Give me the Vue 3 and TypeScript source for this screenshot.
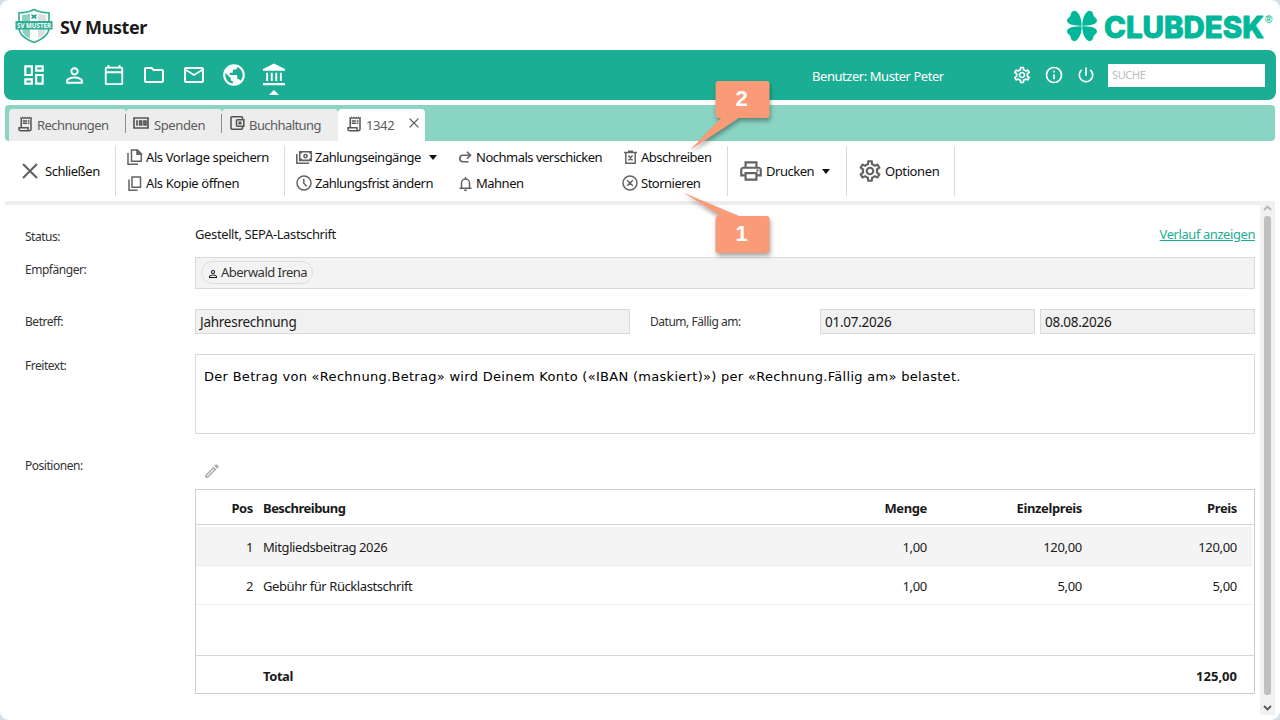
<script setup lang="ts">
import { h, type FunctionalComponent } from 'vue'

interface Glyph {
  d: string
  box?: string
  line?: number
}

const glyphs: Record<string, Glyph> = {
  dashboard: { d: 'M19 5v2h-4V5h4M9 5v6H5V5h4m10 8v6h-4v-6h4M9 17v2H5v-2h4M21 3h-8v6h8V3zM11 3H3v10h8V3zm10 8h-8v10h8V11zm-10 4H3v6h8v-6z' },
  person: { d: 'M12 5.9a2.1 2.1 0 1 1 0 4.2 2.1 2.1 0 0 1 0-4.2m0 9c2.97 0 6.1 1.46 6.1 2.1v1.1H5.9V17c0-.64 3.13-2.1 6.1-2.1M12 4C9.79 4 8 5.79 8 8s1.79 4 4 4 4-1.79 4-4-1.79-4-4-4zm0 9c-2.67 0-8 1.34-8 4v3h16v-3c0-2.66-5.33-4-8-4z' },
  calendar: { d: 'M20 3h-1V1h-2v2H7V1H5v2H4c-1.1 0-2 .9-2 2v16c0 1.1.9 2 2 2h16c1.1 0 2-.9 2-2V5c0-1.1-.9-2-2-2zm0 18H4V10h16v11zm0-13H4V5h16v3z' },
  folder: { d: 'M9.17 6l2 2H20v10H4V6h5.17M10 4H4c-1.1 0-2 .9-2 2v12c0 1.1.9 2 2 2h16c1.1 0 2-.9 2-2V8c0-1.1-.9-2-2-2h-8l-2-2z' },
  mail: { d: 'M22 6c0-1.1-.9-2-2-2H4c-1.1 0-2 .9-2 2v12c0 1.1.9 2 2 2h16c1.1 0 2-.9 2-2V6zm-2 0-8 5-8-5h16zm0 12H4V8l8 5 8-5v10z' },
  globe: { d: 'M12 2C6.48 2 2 6.48 2 12s4.48 10 10 10 10-4.48 10-10S17.52 2 12 2zm-1 17.93c-3.95-.49-7-3.85-7-7.93 0-.62.08-1.21.21-1.79L9 15v1c0 1.1.9 2 2 2v1.93zm6.9-2.54c-.26-.81-1-1.39-1.9-1.39h-1v-3c0-.55-.45-1-1-1H8v-2h2c.55 0 1-.45 1-1V7h2c1.1 0 2-.9 2-2v-.41c2.93 1.19 5 4.06 5 7.41 0 2.08-.8 3.97-2.1 5.39z' },
  bank: { d: 'M12 .5 1 6v1.800h22V6zM4.200 9.800h1.900v8.200H4.200zM8.800 9.800h1.900v8.200H8.800zM13.300 9.800h1.900v8.200h-1.900zM17.900 9.800h1.900v8.200h-1.900zM1 20h22v2.200H1z' },
  gear: { d: 'M19.43 12.98c.04-.32.07-.64.07-.98 0-.34-.03-.66-.07-.98l2.110-1.650c.19-.15.24-.42.12-.64l-2-3.460c-.09-.16-.26-.25-.44-.25-.06 0-.12.01-.17.03l-2.490 1c-.52-.4-1.080-.73-1.690-.98l-.38-2.650C14.460 2.180 14.250 2 14 2h-4c-.25 0-.46.18-.49.42l-.38 2.650c-.61.25-1.170.59-1.690.98l-2.490-1c-.06-.02-.12-.03-.18-.03-.17 0-.34.09-.43.25l-2 3.460c-.13.22-.07.49.12.64l2.110 1.650c-.04.32-.07.65-.07.98s.03.66.07.98l-2.110 1.650c-.19.15-.24.42-.12.64l2 3.460c.09.16.26.25.44.25.06 0 .12-.01.17-.03l2.490-1c.52.4 1.080.73 1.690.98l.38 2.650c.03.24.24.42.49.42h4c.25 0 .46-.18.49-.42l.38-2.650c.61-.25 1.170-.59 1.690-.98l2.490 1c.06.02.12.03.18.03.17 0 .34-.09.43-.25l2-3.460c.12-.22.07-.49-.12-.64l-2.110-1.650zm-1.980-1.710c.04.31.05.52.05.73 0 .21-.02.43-.05.73l-.14 1.130.89.7 1.080.84-.7 1.210-1.270-.51-1.040-.42-.9.68c-.43.32-.84.56-1.250.73l-1.060.43-.16 1.130-.2 1.350h-1.400l-.19-1.350-.16-1.130-1.060-.43c-.43-.18-.83-.41-1.230-.71l-.91-.7-1.060.43-1.270.51-.7-1.210 1.080-.84.89-.7-.14-1.130c-.03-.31-.05-.54-.05-.74s.02-.43.05-.73l.14-1.130-.89-.7-1.080-.84.7-1.210 1.270.51 1.040.42.9-.68c.43-.32.84-.56 1.250-.73l1.060-.43.16-1.130.2-1.350h1.390l.19 1.350.16 1.130 1.060.43c.43.18.83.41 1.230.71l.91.7 1.060-.43 1.270-.51.7 1.210-1.070.85-.89.7.14 1.130zM12 8c-2.210 0-4 1.790-4 4s1.790 4 4 4 4-1.790 4-4-1.790-4-4-4zm0 6c-1.100 0-2-.9-2-2s.9-2 2-2 2 .9 2 2-.9 2-2 2z' },
  info: { d: 'M12 2a10 10 0 1 0 0 20 10 10 0 0 0 0-20zm0 18a8 8 0 1 1 0-16 8 8 0 0 1 0 16zM11 7h2v2h-2zM11 11h2v6h-2z' },
  power: { d: 'M13 3h-2v10h2V3zm4.830 2.170-1.420 1.420A6.920 6.920 0 0 1 19 12a7 7 0 1 1-11.420-5.420L6.170 5.170A8.930 8.930 0 0 0 3 12a9 9 0 1 0 14.830-6.830z' },
  receipt: { d: 'M19.5 3.5 18 2l-1.5 1.5L15 2l-1.5 1.5L12 2l-1.5 1.5L9 2 7.5 3.5 6 2v14H3v3c0 1.660 1.340 3 3 3h12c1.660 0 3-1.340 3-3V2l-1.5 1.5zM15 20H6c-.55 0-1-.45-1-1v-1h10v2zm4-1c0 .55-.45 1-1 1s-1-.45-1-1v-3H8V5h11v14zM9 7h6v2H9zm7 0h2v2h-2zM9 10h6v2H9zm7 0h2v2h-2z' },
  money: { d: 'M1 1h14v10H1zM4 3.200v5.600M6.700 4h1.900v4H6.700zM11 4h1.900v4H11z', box: '0 0 16 12', line: 1.7 },
  wallet: { d: 'M12.500 3V1.800a1 1 0 0 0-1-1h-9.500a1 1 0 0 0-1 1v10.400a1 1 0 0 0 1 1h9.500a1 1 0 0 0 1-1V11M7.500 3.700h6.300v6.600H7.500a1 1 0 0 1-1-1V4.700a1 1 0 0 1 1-1zM9.300 6.300h1.400v1.400H9.300z', box: '0 0 15 14', line: 1.6 },
  cross: { d: 'M1 1 15 15M15 1 1 15', box: '0 0 16 16', line: 2.2 },
  template: { d: 'M1 4v11.200h10M4.500 1h6L14.300 4.800v7.500H4.500zM10 1.200v4h4zM10.800 2v2.500M11.800 4.500h1', box: '0 0 16 16', line: 1.5 },
  copy: { d: 'M1 3.500V14.300h8.500M4 1h8.500v10.300H4z', box: '0 0 14 15', line: 1.5 },
  payments: { d: 'M3.700.8h11.600v8.600H3.700zM.8 3v9.200h12.400M9.500 3.500a1.600 1.600 0 1 1 0 3.200 1.600 1.600 0 0 1 0-3.200zM4.500 1.800h1.500M13 1.800h1.500M4.500 8.400h1.500M13 8.400h1.500', box: '0 0 16 13', line: 1.6 },
  clock: { d: 'M8 1a7 7 0 1 1 0 14A7 7 0 0 1 8 1zM7.800 3.800V8.200l3 3', box: '0 0 16 16', line: 1.5 },
  redo: { d: 'M8 .8l3.500 3.500L8 7.800M11.500 4.300H4a3.200 3.200 0 0 0 0 6.400h5.500', box: '0 0 13 12', line: 1.6 },
  bell: { d: 'M.5 12.300h12M2.500 12.300V7a4 4 0 0 1 8 0v5.300M6.500 1v2M5.200 14.200h2.600', box: '0 0 13 15', line: 1.5 },
  bin: { d: 'M0 2.500h13M4 1.200h5M1.800 3v10.200h9.400V3M4.500 5.500l4 5M8.500 5.500l-4 5', box: '0 0 13 14', line: 1.5 },
  cancel: { d: 'M8 1a7 7 0 1 1 0 14A7 7 0 0 1 8 1zM5.200 5.200l5.600 5.600M10.800 5.200l-5.600 5.600', box: '0 0 16 16', line: 1.5 },
  print: { d: 'M19 8h-1V3H6v5H5c-1.660 0-3 1.340-3 3v6h4v4h12v-4h4v-6c0-1.660-1.340-3-3-3zM8 5h8v3H8V5zm8 12v2H8v-4h8v2zm2-2v-2H6v2H4v-4c0-.55.45-1 1-1h14c.55 0 1 .45 1 1v4h-2zM17 10.500h2v2h-2z' },
  pencil: { d: 'M14.060 9.020l.92.92L5.920 19H5v-.92l9.060-9.060M17.660 3c-.25 0-.51.1-.7.290l-1.830 1.830 3.750 3.750 1.830-1.830a1 1 0 0 0 0-1.410l-2.340-2.340c-.2-.2-.45-.29-.71-.29zm-3.600 3.190L3 17.250V21h3.750L17.810 9.940l-3.750-3.750z' },
}

const Glyph: FunctionalComponent<{ name: string }> = (props) => {
  const g = glyphs[props.name]
  const paint = g.line
    ? { fill: 'none', stroke: 'currentColor', 'stroke-width': g.line }
    : { fill: 'currentColor' }
  return h('svg', { viewBox: g.box ?? '0 0 24 24', 'aria-hidden': 'true' }, [h('path', { d: g.d, ...paint })])
}
Glyph.props = ['name']

const modules = ['dashboard', 'person', 'calendar', 'folder', 'mail', 'globe', 'bank']

const tabs = [
  { id: 'rechnungen', label: 'Rechnungen', icon: 'receipt' },
  { id: 'spenden', label: 'Spenden', icon: 'money' },
  { id: 'buchhaltung', label: 'Buchhaltung', icon: 'wallet' },
]

const groups = [
  { id: 'g-save', items: [['template', 'Als Vorlage speichern'], ['copy', 'Als Kopie öffnen']] },
  { id: 'g-pay', items: [['payments', 'Zahlungseingänge'], ['clock', 'Zahlungsfrist ändern']] },
  { id: 'g-send', items: [['redo', 'Nochmals verschicken'], ['bell', 'Mahnen']] },
  { id: 'g-void', items: [['bin', 'Abschreiben'], ['cancel', 'Stornieren']] },
]

const positions = [
  { pos: 1, text: 'Mitgliedsbeitrag 2026', qty: '1,00', unit: '120,00', price: '120,00' },
  { pos: 2, text: 'Gebühr für Rücklastschrift', qty: '1,00', unit: '5,00', price: '5,00' },
]
</script>

<template>
  <div class="window">
    <header class="brand">
      <svg class="crest" viewBox="0 0 38 36">
        <path d="M19 1.500C14 4 9 4.800 4 4.800V20c0 7 6 11 15 14.500C28 31 34 27 34 20V4.800C29 4.800 24 4 19 1.500z" fill="#fff" stroke="#2fae94" stroke-width="1.600" />
        <path d="M7 7c3 0 5.500-.4 8-1.400v25C10 28.500 7 25 7 20z" fill="#8fd0c0" />
        <path d="M23 5.600c2.500 1 5 1.400 8 1.400v13c0 5-3 8.500-8 10.600z" fill="#dedede" />
        <path d="M16.500 6l2.500 1.300L21.500 6v1.700l-1 .9 1 .9v1.700L19 10l-2.500 1.200V9.500l1-.9-1-.9z" fill="#1bae94" />
        <path d="M.5 13h37v8.500H.5z" fill="#2fae94" />
        <text x="19" y="19.600" text-anchor="middle" textLength="34" lengthAdjust="spacingAndGlyphs">SV MUSTER</text>
      </svg>
      <h1>SV Muster</h1>
      <svg class="logo" viewBox="0 0 208 34">
        <g fill="#00b899">
          <path d="M15.700 15.700C10 15.700 1 15.200 1 10.500 1 8.500 2.800 8 4 6.500 5 5.200 4.500 3.500 5.800 2 7.500.4 9.500.6 11 2 14.500 5.300 15.700 11 15.700 15.700z" />
          <path d="M16.300 15.700C22 15.700 31 15.200 31 10.500 31 8.500 29.200 8 28 6.500 27 5.200 27.500 3.500 26.200 2 24.500.4 22.500.6 21 2 17.500 5.300 16.300 11 16.300 15.700z" />
          <path d="M15.700 16.300C10 16.300 1 16.800 1 21.500 1 23.500 2.800 24 4 25.500 5 26.800 4.500 28.500 5.800 30 7.500 31.600 9.500 31.400 11 30 14.500 26.700 15.700 21 15.700 16.300z" />
          <path d="M16.300 16.300C22 16.300 31 16.800 31 21.500 31 23.500 29.200 24 28 25.500 27 26.800 27.500 28.500 26.200 30 24.500 31.600 22.500 31.400 21 30 17.500 26.700 16.300 21 16.300 16.300z" />
          <text class="word" x="38" y="27.600" textLength="160" lengthAdjust="spacing">CLUBDESK</text>
          <text class="reg" x="199" y="13">®</text>
        </g>
      </svg>
    </header>

    <nav class="modules">
      <div class="module-list">
        <span v-for="m in modules" :key="m" class="module" :class="[m, { current: m === 'bank' }]">
          <Glyph :name="m" />
        </span>
      </div>
      <span class="user">Benutzer: Muster Peter</span>
      <div class="tools">
        <Glyph name="gear" />
        <Glyph name="info" />
        <Glyph name="power" />
      </div>
      <div class="search">SUCHE</div>
    </nav>

    <div class="tabs">
      <div v-for="t in tabs" :key="t.id" class="tab" :class="t.id">
        <Glyph :name="t.icon" class="tab-icon" />
        <span>{{ t.label }}</span>
      </div>
      <div class="tab active">
        <Glyph name="receipt" class="tab-icon" />
        <span>1342</span>
        <Glyph name="cross" class="tab-close" />
      </div>
    </div>

    <div class="toolbar">
      <div class="big close"><Glyph name="cross" /><span>Schließen</span></div>
      <div v-for="g in groups" :key="g.id" class="group" :class="g.id">
        <div v-for="[icon, label] in g.items" :key="icon" class="action">
          <span class="slot"><Glyph :name="icon" :class="icon" /></span>
          <span>{{ label }}</span>
          <i v-if="icon === 'payments'" class="caret"></i>
        </div>
      </div>
      <div class="big print"><Glyph name="print" /><span>Drucken</span><i class="caret"></i></div>
      <div class="big options"><Glyph name="gear" /><span>Optionen</span></div>
    </div>

    <div class="body">
      <main class="form">
        <div class="row status">
          <label>Status:</label>
          <span class="value">Gestellt, SEPA-Lastschrift</span>
          <a class="history">Verlauf anzeigen</a>
        </div>
        <div class="row recipient">
          <label>Empfänger:</label>
          <div class="field chips">
            <span class="chip"><Glyph name="person" /><span>Aberwald Irena</span></span>
          </div>
        </div>
        <div class="row subject">
          <label>Betreff:</label>
          <div class="field text">Jahresrechnung</div>
          <label class="date-label">Datum, Fällig am:</label>
          <div class="field date">01.07.2026</div>
          <div class="field date">08.08.2026</div>
        </div>
        <div class="row free">
          <label>Freitext:</label>
          <div class="field memo">Der Betrag von «Rechnung.Betrag» wird Deinem Konto («IBAN (maskiert)») per «Rechnung.Fällig am» belastet.</div>
        </div>
        <div class="row items">
          <label>Positionen:</label>
          <div class="items-box">
            <Glyph name="pencil" class="edit" />
            <div class="grid">
              <div class="line head">
                <span>Pos</span><span>Beschreibung</span><span>Menge</span><span>Einzelpreis</span><span>Preis</span>
              </div>
              <div class="lines">
                <div v-for="p in positions" :key="p.pos" class="line">
                  <span>{{ p.pos }}</span><span>{{ p.text }}</span><span>{{ p.qty }}</span><span>{{ p.unit }}</span><span>{{ p.price }}</span>
                </div>
              </div>
              <div class="line total">
                <span></span><span>Total</span><span></span><span></span><span>125,00</span>
              </div>
            </div>
          </div>
        </div>
      </main>
      <div class="scrollbar">
        <svg class="up" viewBox="0 0 9 6"><path d="M1 5l3.500-3.500L8 5" /></svg>
        <div class="thumb"></div>
        <svg class="down" viewBox="0 0 9 6"><path d="M1 1l3.500 3.500L8 1" /></svg>
      </div>
    </div>

    <div class="callout two">
      <svg viewBox="0 0 90 75"><path d="M36.500 2h48q3 0 3 3v31q0 3-3 3H57L8 71 39 39h-2.500q-3 0-3-3V5q0-3 3-3z" /></svg>
      <b>2</b>
    </div>
    <div class="callout one">
      <svg viewBox="0 0 90 75"><path d="M36.500 29H39L1 5.500 57 29h27.500q3 0 3 3v31q0 3-3 3h-48q-3 0-3-3V32q0-3 3-3z" /></svg>
      <b>1</b>
    </div>
  </div>
</template>

<style>
body {
  background: #d3dee8;
}
</style>

<style scoped>
* {
  box-sizing: border-box;
}
.window {
  position: relative;
  display: flex;
  flex-direction: column;
  width: 1280px;
  height: 720px;
  overflow: hidden;
  border-radius: 9px;
  background: #fff;
  color: #1a1a1a;
  font: 13px/18px "Noto Sans", "Open Sans", sans-serif;
  letter-spacing: -0.38px;
  white-space: nowrap;
}
svg {
  display: block;
  flex: none;
}
.brand {
  display: flex;
  align-items: flex-start;
  height: 50px;
  padding: 8px 6px 0 15px;
}
.crest {
  width: 38px;
  height: 36px;
}
.crest text {
  fill: #fff;
  font: bold 7px "Open Sans", sans-serif;
  letter-spacing: 0;
}
h1 {
  margin: 7px auto 0 7px;
  font-size: 18px;
  line-height: 25px;
  letter-spacing: -0.4px;
}
.logo {
  width: 208px;
  height: 34px;
  margin-top: 2px;
  overflow: visible;
}
.word {
  font: 800 29.500px Inter, sans-serif;
  letter-spacing: 0;
  stroke: #00b899;
  stroke-width: 0.9px;
  stroke-linejoin: round;
}
.reg {
  font: bold 10px "Liberation Sans", sans-serif;
  letter-spacing: 0;
}
.modules {
  display: flex;
  align-items: center;
  height: 50px;
  margin: 0 4px;
  padding: 0 11px 0 18px;
  border-radius: 8px;
  background: #1cae94;
  color: #fff;
}
.module-list {
  display: flex;
  gap: 16px;
}
.module {
  display: flex;
  flex-direction: column;
  align-items: center;
  justify-content: center;
  position: relative;
  width: 24px;
  height: 50px;
}
.module svg {
  width: 24px;
  height: 24px;
}
.module.calendar svg {
  width: 22px;
  height: 22px;
}
.module.dashboard svg,
.module.globe svg {
  width: 26px;
  height: 26px;
}
.module.person svg {
  width: 25px;
  height: 25px;
}
.module.current::after {
  content: "";
  position: absolute;
  top: 40px;
  border: 5px solid transparent;
  border-top: 0;
  border-bottom-color: #fff;
}
.user {
  width: 200px;
  margin: 2px 0 0 526px;
  letter-spacing: -0.45px;
}
.tools {
  display: flex;
  gap: 12px;
  width: 96px;
}
.tools svg {
  width: 20px;
  height: 20px;
}
.search {
  width: 157px;
  height: 23px;
  padding-left: 4px;
  background: #fff;
  color: #bcbcbc;
  font-size: 11px;
  line-height: 22px;
}
.tabs {
  display: flex;
  height: 36px;
  margin: 5px 5px 0;
  padding: 4px 0 0 4px;
  border-radius: 4px;
  background: #8ad4c4;
}
.tab {
  display: flex;
  position: relative;
  padding: 0 0 0 7px;
  border-radius: 4px 4px 0 0;
  background: #ededed;
  color: #5c5c5c;
  letter-spacing: -0.57px;
  line-height: 32px;
}
.tab:not(.active)::after {
  content: "";
  position: absolute;
  right: 0;
  top: 5px;
  width: 1px;
  height: 19px;
  background: #8c8c8c;
}
.tab-icon {
  width: 18px;
  height: 18px;
  margin: 6px 3px 0 0;
  color: #555;
}
.rechnungen {
  width: 117px;
}
.spenden {
  width: 96px;
  padding-left: 7px;
  letter-spacing: -0.4px;
}
.spenden .tab-icon {
  width: 16px;
  height: 12px;
  margin: 8px 5px 0 0;
}
.buchhaltung {
  width: 116px;
  padding-left: 8px;
}
.buchhaltung .tab-icon {
  width: 15px;
  height: 14px;
  margin: 7px 4px 0 0;
}
.tab.buchhaltung::after {
  display: none;
}
.tab.active {
  width: 87px;
  background: #fff;
  letter-spacing: -0.38px;
}
.tab-close {
  width: 10px;
  height: 10px;
  margin: 9px 0 0 15px;
}
.toolbar {
  display: flex;
  height: 60px;
  padding-left: 22px;
  color: #111;
}
.toolbar svg {
  color: #636363;
}
.big {
  display: flex;
  align-items: center;
  position: relative;
  height: 60px;
  letter-spacing: -0.48px;
}
.big.close svg {
  width: 16px;
  height: 16px;
  margin-right: 7px;
}
.big.close {
  width: 94px;
}
.big::after,
.g-save::after,
.g-void::after {
  content: "";
  position: absolute;
  right: 0;
  top: 5px;
  width: 1px;
  height: 50px;
  background: #d9d9d9;
}
.group {
  position: relative;
  padding-top: 3px;
  letter-spacing: -0.5px;
}
.action {
  display: flex;
  align-items: center;
  height: 26px;
}
.slot {
  display: flex;
  justify-content: center;
  width: 16px;
  margin-right: 3px;
}
.group.g-save {
  width: 169px;
  padding-left: 11px;
  letter-spacing: -0.4px;
}
.g-pay {
  width: 172px;
  padding-left: 11px;
}
.g-send {
  width: 165px;
}
.g-void {
  width: 106px;
}
.template,
.clock,
.cancel {
  width: 16px;
  height: 16px;
}
.copy {
  width: 14px;
  height: 15px;
}
.payments {
  width: 16px;
  height: 13px;
}
.redo {
  width: 13px;
  height: 12px;
}
.bell {
  width: 13px;
  height: 15px;
}
.bin {
  width: 13px;
  height: 14px;
}
.caret {
  margin-left: 8px;
  border: 4px solid transparent;
  border-top: 5px solid #111;
  border-bottom: 0;
}
.big.print {
  width: 119px;
  padding-left: 10px;
}
.big.options {
  width: 108px;
  padding-left: 10px;
  letter-spacing: -0.4px;
}
.print svg,
.options svg {
  width: 26px;
  height: 26px;
  margin-right: 2px;
}
.body {
  display: flex;
  height: 514px;
  margin: 0 5px;
}
.form {
  width: 1255px;
  padding: 20px 5px 0 20px;
  border-top: 4px solid #ededed;
}
.row {
  display: flex;
}
label {
  width: 170px;
  padding-top: 3px;
  color: #333;
  font-size: 12px;
  letter-spacing: -0.47px;
}
.status {
  height: 32px;
}
.history {
  margin-left: auto;
  color: #1cae94;
  letter-spacing: -0.43px;
  text-decoration: underline;
}
.recipient {
  height: 52px;
}
.recipient label,
.subject label {
  padding-top: 4px;
}
.field {
  border: 1px solid #d9d9d9;
  background: #f1f1f1;
}
.chips {
  width: 1060px;
  height: 32px;
  padding: 3px 5px;
  background: #f3f3f3;
}
.chip {
  display: flex;
  width: 112px;
  height: 23px;
  padding-left: 5px;
  border: 1px solid #dcdcdc;
  border-radius: 12px;
  color: #333;
  letter-spacing: -0.52px;
  line-height: 21px;
}
.chip svg {
  width: 12px;
  height: 12px;
  margin: 6px 2px 0 0;
  color: #111;
}
.subject {
  height: 45px;
}
.subject .field {
  height: 25px;
  padding-left: 4px;
  font-size: 13.500px;
  letter-spacing: -0.26px;
  line-height: 24px;
}
.text {
  width: 435px;
}
.date-label {
  margin-left: 20px;
}
.date {
  width: 215px;
}
.date + .date {
  margin-left: 5px;
}
.free {
  height: 100px;
}
.memo {
  width: 1060px;
  height: 80px;
  padding: 12px 8px;
  background: #fff;
  color: #000;
  font: 13px/20px "DejaVu Sans", sans-serif;
  letter-spacing: 0.293px;
}
.edit {
  width: 18px;
  height: 18px;
  margin: 8px 0 9px 8px;
  color: #a9a9a9;
}
.grid {
  width: 1060px;
  height: 205px;
  border: 1px solid #cdcdcd;
}
.line {
  display: grid;
  grid-template-columns: 57px 10px 519px 145px 155px 155px;
  height: 39px;
  padding-top: 1px;
  border-bottom: 1px solid #ececec;
  line-height: 38px;
}
.line span:nth-child(1) {
  text-align: right;
}
.line span:nth-child(2) {
  grid-column: 3;
  letter-spacing: -0.42px;
}
.line span:nth-child(n + 3) {
  letter-spacing: -0.3px;
  text-align: right;
}
.line.head {
  height: 35px;
  border-bottom: 1px solid #d5d5d5;
  font-weight: bold;
  line-height: 34px;
}
.line.head span:nth-child(2) {
  letter-spacing: -0.52px;
}
.line.head span:nth-child(n + 3) {
  letter-spacing: -0.38px;
}
.lines {
  height: 130px;
  padding: 2px 2px 0 0;
}
.lines .line:first-child {
  background: #f4f4f4;
}
.line.total {
  height: 38px;
  border-top: 1px solid #d5d5d5;
  border-bottom: 0;
  font-weight: bold;
}
.line.total span:last-child {
  letter-spacing: 0;
}
.scrollbar {
  display: flex;
  flex-direction: column;
  align-items: center;
  width: 15px;
  background: #f1f1f1;
}
.scrollbar svg {
  width: 9px;
  height: 6px;
  fill: none;
  stroke: #b5b5b5;
  stroke-width: 1.800px;
}
.scrollbar .up {
  margin: 4px 0 5px;
}
.scrollbar .down {
  margin-top: 10px;
  stroke: #555;
}
.thumb {
  width: 7px;
  height: 479px;
  border-radius: 3px;
  background: #c0c0c0;
}
.callout {
  position: absolute;
  left: 682px;
  width: 90px;
  height: 75px;
}
.callout.two {
  top: 79px;
}
.callout.one {
  top: 187px;
}
.callout svg {
  width: 90px;
  height: 75px;
  overflow: visible;
  fill: #f99b76;
  filter: drop-shadow(1px 3px 2px rgba(0, 0, 0, 0.35));
}
.callout b {
  position: absolute;
  left: 33px;
  top: 1px;
  width: 53px;
  color: #fff;
  font: bold 22px/37px "Liberation Sans", sans-serif;
  letter-spacing: 0;
  text-align: center;
}
.callout.one b {
  top: 28px;
}
</style>
